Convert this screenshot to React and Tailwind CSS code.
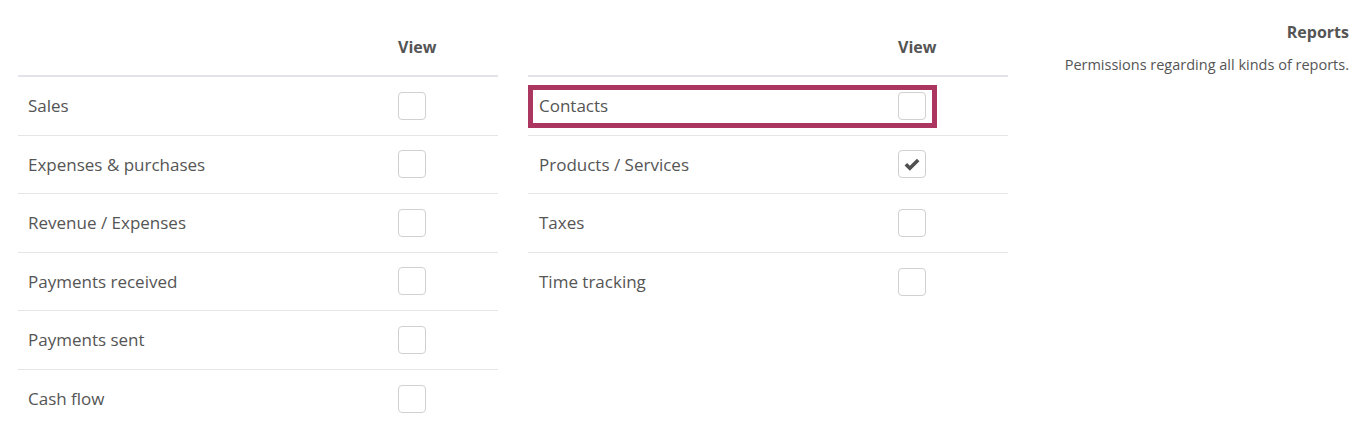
import React from "react";

const left = ["Sales", "Expenses & purchases", "Revenue / Expenses", "Payments received", "Payments sent", "Cash flow"];
const right = [
  { label: "Contacts", highlight: true },
  { label: "Products / Services", checked: true },
  { label: "Taxes" },
  { label: "Time tracking" },
];

const Check = ({ checked }) => (
  <div className="w-[28px] h-[28px] rounded-[4px] border border-[#d0d0d0] bg-white flex items-center justify-center">
    {checked && (
      <svg className="w-[18px] h-[18px]" viewBox="0 0 16 16" fill="none" stroke="#505050" strokeWidth="3.2" strokeLinecap="butt">
        <path d="M2.5 8.2l3.6 3.6 7.4-7.4" />
      </svg>
    )}
  </div>
);

const Table = ({ rows, viewCol, pad }) => (
  <div className="w-[480px]">
    <div className="h-[59px] border-b-2 border-[#e3e3e8] flex items-center">
      <div style={{ width: viewCol }} />
      <div className="text-[16px] font-bold text-[#555]">View</div>
    </div>
    {rows.map((r, i) => (
      <div key={i} className={`h-[58.5px] flex items-center relative ${i < rows.length - 1 ? "border-b border-[#e6e6e6]" : ""}`}>
        {r.highlight && (
          <div className="absolute left-0 top-[8px] w-[409px] h-[43px] border-[5px] border-[#ab3760] pointer-events-none" />
        )}
        <div className="text-[17px] text-[#555]" style={{ width: viewCol, paddingLeft: pad }}>{r.label}</div>
        <Check checked={r.checked} />
      </div>
    ))}
  </div>
);

export default function App() {
  return (
    <div className="bg-white min-h-screen pl-[18px] pr-[16px] pt-[18px] flex font-['Open_Sans',sans-serif]">
      <Table rows={left.map((l) => ({ label: l }))} viewCol={380} pad={10} />
      <div className="w-[30px]" />
      <Table rows={right} viewCol={370} pad={11} />
      <div className="flex-1 text-right pt-[2px]">
        <div className="text-[16px] font-bold text-[#555]">Reports</div>
        <div className="text-[14.5px] text-[#555] mt-[10px]">Permissions regarding all kinds of reports.</div>
      </div>
    </div>
  );
}
